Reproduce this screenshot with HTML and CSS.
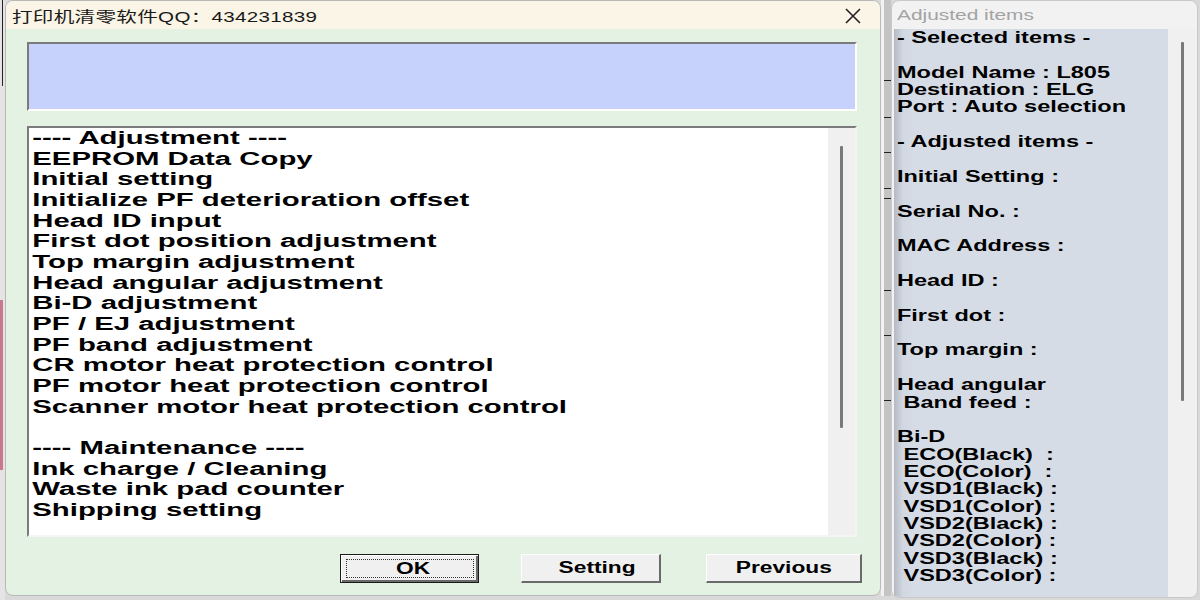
FILE: index.html
```html
<!DOCTYPE html>
<html lang="en">
<head>
    <meta charset="UTF-8">
    <title>打印机清零软件</title>
    <link rel="stylesheet" href="styles.css">
</head>
<body>
    <div class="edge">
        <div class="edge-line"></div>
        <div class="edge-pink"></div>
    </div>

    <div class="dialog main-dialog">
        <div class="title-bar">
            <span class="title-text">打印机清零软件QQ：434231839</span>
            <svg class="close-icon" width="18" height="18" viewBox="0 0 18 18">
                <path d="M2 2 L16 16 M16 2 L2 16" stroke="#222" stroke-width="1.6" fill="none"/>
            </svg>
        </div>
        <div class="main-body">
            <div class="info-box"></div>
            <div class="list-box">
                <div class="list-lines">
                    <div>---- Adjustment ----</div>
                    <div>EEPROM Data Copy</div>
                    <div>Initial setting</div>
                    <div>Initialize PF deterioration offset</div>
                    <div>Head ID input</div>
                    <div>First dot position adjustment</div>
                    <div>Top margin adjustment</div>
                    <div>Head angular adjustment</div>
                    <div>Bi-D adjustment</div>
                    <div>PF / EJ adjustment</div>
                    <div>PF band adjustment</div>
                    <div>CR motor heat protection control</div>
                    <div>PF motor heat protection control</div>
                    <div>Scanner motor heat protection control</div>
                    <div>&nbsp;</div>
                    <div>---- Maintenance ----</div>
                    <div>Ink charge / Cleaning</div>
                    <div>Waste ink pad counter</div>
                    <div>Shipping setting</div>
                </div>
                <div class="scroll-track list-scroll">
                    <div class="scroll-thumb"></div>
                </div>
            </div>
            <div class="button-row">
                <button class="win-button default-button ok-button"><span class="focus-rect"><span class="btn-label">OK</span></span></button>
                <button class="win-button setting-button"><span class="btn-label">Setting</span></button>
                <button class="win-button previous-button"><span class="btn-label">Previous</span></button>
            </div>
        </div>
    </div>

    <div class="behind-strip">
        <div class="mark" style="top: 80px"></div>
        <div class="mark" style="top: 117px"></div>
        <div class="mark" style="top: 152px"></div>
        <div class="mark" style="top: 188px"></div>
        <div class="mark" style="top: 198px"></div>
        <div class="mark" style="top: 290px"></div>
        <div class="mark" style="top: 335px"></div>
        <div class="mark" style="top: 400px"></div>
    </div>

    <div class="dialog side-dialog">
        <div class="side-title">
            <span class="side-title-text">Adjusted items</span>
        </div>
        <div class="side-body">
            <div class="side-panel">
                <div class="side-lines">- Selected items -

Model Name : L805
Destination : ELG
Port : Auto selection

- Adjusted items -

Initial Setting :

Serial No. :

MAC Address :

Head ID :

First dot :

Top margin :

Head angular
 Band feed :

Bi-D
 ECO(Black)  :
 ECO(Color)  :
 VSD1(Black) :
 VSD1(Color) :
 VSD2(Black) :
 VSD2(Color) :
 VSD3(Black) :
 VSD3(Color) :</div>
            </div>
            <div class="scroll-track side-scroll">
                <div class="scroll-thumb"></div>
            </div>
        </div>
    </div>
</body>
</html>
```

FILE: styles.css
```css
body, html {
    margin: 0;
    padding: 0;
    width: 1200px;
    height: 600px;
    overflow: hidden;
}

body {
    display: flex;
    background: #d9d9d9;
    font-family: 'Liberation Sans', Arial, 'Noto Sans CJK SC', sans-serif;
}

/* strip of the window behind, at the left */
.edge {
    width: 5px;
    height: 600px;
    position: relative;
    background: #e4e4e4;
}
.edge-line {
    position: absolute;
    left: 2px;
    top: 0;
    width: 1px;
    height: 86px;
    background: #222;
}
.edge-pink {
    position: absolute;
    left: 0;
    top: 300px;
    width: 3px;
    height: 170px;
    background: #c9798c;
}

.dialog {
    display: flex;
    flex-direction: column;
    border: 1px solid #b9b9b9;
    border-radius: 8px;
    overflow: hidden;
    box-sizing: border-box;
}

.main-dialog {
    width: 876px;
    height: 596px;
    background: #e3f2e2;
}

.title-bar {
    height: 28px;
    background: #faf5e6;
    display: flex;
    align-items: center;
    justify-content: space-between;
    padding: 0 18px 0 6px;
    flex-shrink: 0;
}
.title-text {
    display: inline-block;
    font-size: 14.5px;
    color: #1a1a1a;
    transform: scaleX(1.42);
    transform-origin: left center;
    letter-spacing: 0.2px;
}
.close-icon {
    margin-top: 1px;
}

.main-body {
    display: flex;
    flex-direction: column;
    padding: 13px 0 0 21px;
}

.info-box {
    width: 830px;
    height: 69px;
    box-sizing: border-box;
    background: #c6d2fc;
    border-top: 2px solid #7b7b7b;
    border-left: 2px solid #7b7b7b;
    border-right: 2px solid #ffffff;
    border-bottom: 2px solid #ffffff;
}

.list-box {
    margin-top: 15px;
    width: 830px;
    height: 411px;
    box-sizing: border-box;
    background: #ffffff;
    border-top: 2px solid #7b7b7b;
    border-left: 2px solid #7b7b7b;
    border-right: 2px solid #f4f4f4;
    border-bottom: 2px solid #f4f4f4;
    display: flex;
    overflow: hidden;
}
.list-lines {
    flex: 1;
    padding: 0 0 0 2px;
    font-size: 18px;
    font-weight: bold;
    line-height: 20.65px;
    color: #000;
    transform: scaleX(1.63);
    transform-origin: left top;
}
.list-lines div {
    white-space: pre;
}

.scroll-track {
    background: #f0f0f0;
    display: flex;
    justify-content: center;
    flex-shrink: 0;
}
.scroll-thumb {
    width: 3px;
    background: #7a7a7a;
    border-radius: 1px;
}
.list-scroll {
    width: 27px;
}
.list-scroll .scroll-thumb {
    margin-top: 18px;
    height: 282px;
}

.button-row {
    display: flex;
    margin-top: 17px;
    padding-left: 313px;
}
.win-button {
    height: 29px;
    box-sizing: border-box;
    background: #f0f0f0;
    border-top: 1px solid #ffffff;
    border-left: 1px solid #ffffff;
    border-right: 2px solid #6a6a6a;
    border-bottom: 2px solid #6a6a6a;
    padding: 0;
    display: flex;
    align-items: center;
    justify-content: center;
    font-family: 'Liberation Sans', Arial, sans-serif;
    font-size: 16px;
    font-weight: bold;
    color: #000;
}
.btn-label {
    display: inline-block;
    transform: scaleX(1.42);
}
.default-button {
    border: 1px solid #1a1a1a;
    box-shadow: inset 1px 1px 0 #ffffff, inset -2px -2px 0 #6a6a6a;
}
.focus-rect {
    display: flex;
    align-items: center;
    justify-content: center;
    width: 128px;
    height: 19px;
    padding-left: 6px;
    box-sizing: border-box;
    border: 1px dotted #333;
}
.ok-button {
    width: 139px;
}
.setting-button {
    width: 140px;
    margin-left: 42px;
    padding-left: 14px;
}
.previous-button {
    width: 156px;
    margin-left: 45px;
}

/* window peeking out between the two dialogs */
.behind-strip {
    width: 10px;
    height: 596px;
    background: linear-gradient(to right, #f2f2f2 0, #f2f2f2 3px, #c4c4c4 3px, #c4c4c4 10px);
    position: relative;
}
.mark {
    position: absolute;
    left: 3px;
    width: 7px;
    height: 1px;
    background: #222;
}

.side-dialog {
    width: 307px;
    height: 598px;
    background: #f2f2f2;
    border-color: #c9c9c9;
}
.side-title {
    height: 28px;
    display: flex;
    align-items: center;
    padding-left: 5px;
    flex-shrink: 0;
}
.side-title-text {
    display: inline-block;
    font-size: 14.5px;
    color: #a3a3a3;
    transform: scaleX(1.44);
    transform-origin: left center;
}
.side-body {
    flex: 1;
    display: flex;
    padding-left: 2px;
}
.side-panel {
    width: 274px;
    background: linear-gradient(to right, #b4b9c2 0, #d2d8e2 9px, #d6dce6 20px);
    overflow: hidden;
}
.side-lines {
    padding-left: 2px;
    font-size: 16px;
    font-weight: bold;
    line-height: 17.36px;
    color: #000;
    white-space: pre;
    transform: scaleX(1.47);
    transform-origin: left top;
}
.side-scroll {
    width: 28px;
}
.side-scroll .scroll-thumb {
    margin-top: 13px;
    height: 359px;
}
```
